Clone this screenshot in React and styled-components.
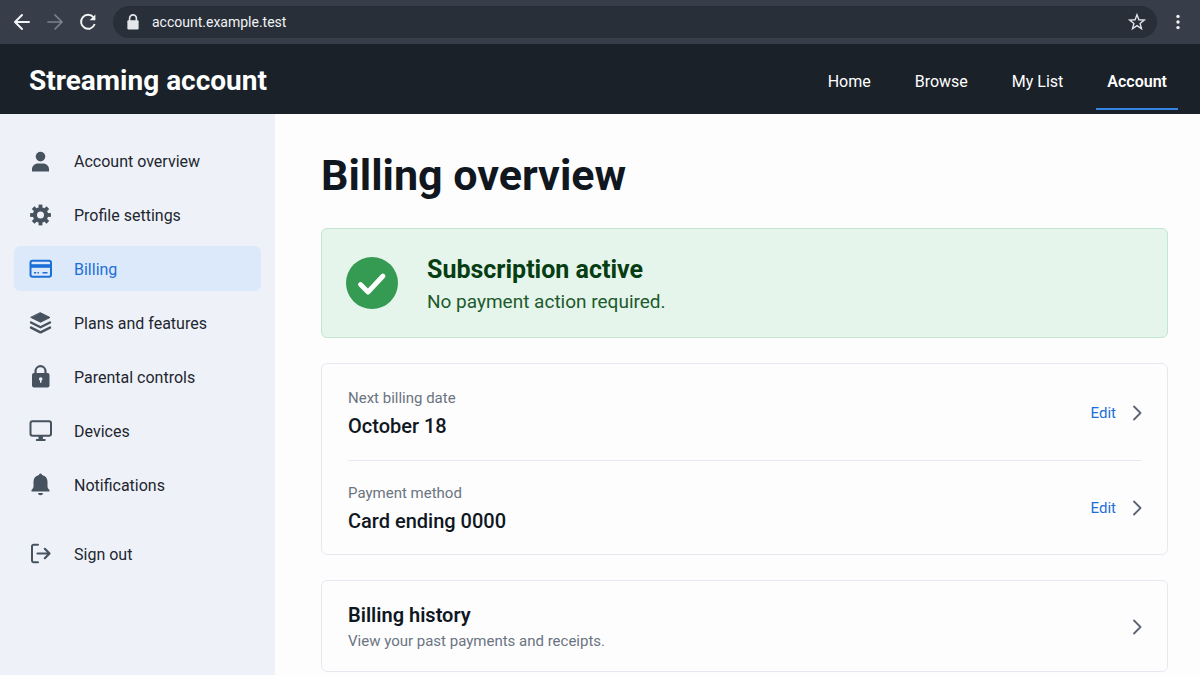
import React from 'react'
import styled, { createGlobalStyle } from 'styled-components'

const sans = "Roboto, 'Noto Sans', sans-serif"

const GlobalStyle = createGlobalStyle`
  * {
    box-sizing: border-box;
  }
  html, body, #root {
    min-height: 100vh;
  }
  body {
    margin: 0;
    background: #fdfdfe;
    color: #10171f;
    font-family: ${sans};
    font-size: 16px;
    line-height: 24px;
  }
  h1, h2, p, dl, dt, dd {
    margin: 0;
    padding: 0;
  }
  button, input {
    font: inherit;
  }
  a {
    color: inherit;
    text-decoration: none;
  }
`

/* icons */

const Svg = ({ size = 24, children }) => (
  <svg
    width={size}
    height={size}
    viewBox="0 0 24 24"
    fill="none"
    stroke="currentColor"
    strokeWidth="2"
    strokeLinecap="round"
    strokeLinejoin="round"
    aria-hidden="true"
  >
    {children}
  </svg>
)

const BackIcon = () => (
  <Svg>
    <path d="M19 12H5.5M12 5l-7 7 7 7" />
  </Svg>
)

const ForwardIcon = () => (
  <Svg>
    <path d="M5 12h13.5M12 5l7 7-7 7" strokeWidth="1.7" />
  </Svg>
)

const ReloadIcon = () => (
  <Svg>
    <path d="M17.4 7.2A7 7 0 1 0 18.7 14" strokeWidth="1.9" strokeLinecap="butt" />
    <path d="M19.4 4.4v5.8h-5.8z" fill="currentColor" stroke="none" />
  </Svg>
)

const SecureIcon = () => (
  <Svg size={18}>
    <path d="M7.5 11V7a4.5 4.5 0 0 1 9 0v4" strokeWidth="2.2" />
    <rect x="4.500" y="9.5" width="15" height="12.5" rx="1.6" fill="currentColor" stroke="none" />
  </Svg>
)

const StarIcon = () => (
  <Svg size={20}>
    <path
      d="M12 3.2l2.3 6.1 6.5.3-5.1 4.1 1.7 6.3-5.4-3.6-5.4 3.6 1.7-6.3-5.1-4.1 6.5-.3z"
      strokeWidth="1.6"
      strokeLinejoin="miter"
    />
  </Svg>
)

const MoreIcon = () => (
  <Svg>
    <g fill="currentColor" stroke="none">
      <circle cx="12" cy="6.4" r="1.7" />
      <circle cx="12" cy="12" r="1.7" />
      <circle cx="12" cy="17.6" r="1.7" />
    </g>
  </Svg>
)

const UserIcon = () => (
  <Svg>
    <g fill="currentColor" stroke="none">
      <circle cx="12.5" cy="7.6" r="4.8" />
      <path d="M4 22.4v-2.2c0-3.3 2.6-5.8 6-5.8h5c3.4 0 6 2.5 6 5.8v2.2z" />
    </g>
  </Svg>
)

const GearIcon = () => (
  <Svg>
    <circle cx="12.5" cy="12" r="5.6" strokeWidth="4.2" />
    <g strokeWidth="3.8" strokeLinecap="butt">
      {[0, 45, 90, 135, 180, 225, 270, 315].map((angle) => (
        <path key={angle} d="M12.5 5.500V1.600" transform={`rotate(${angle} 12.5 12)`} />
      ))}
    </g>
  </Svg>
)

const CardIcon = () => (
  <Svg>
    <rect x="2.5" y="3.8" width="20.5" height="16" rx="2" />
    <path d="M2.5 9h20.5" strokeWidth="3.600" strokeLinecap="butt" />
    <path d="M6 15.800h2.200M9.500 15.800h1.500M14.500 15.800h5" strokeWidth="1.400" strokeLinecap="butt" />
  </Svg>
)

const LayersIcon = () => (
  <Svg>
    <path d="M12.5 1.800l9.500 4.700-9.500 4.700L3 6.500z" fill="currentColor" strokeWidth="1" />
    <path d="M3 11.500l9.500 4.800 9.500-4.800M3 16.600l9.500 4.800 9.500-4.800" strokeWidth="2.400" />
  </Svg>
)

const LockIcon = () => (
  <Svg>
    <path d="M7.500 9V6.200a5 5 0 0 1 10 0V9" strokeWidth="2.200" />
    <rect x="4" y="8" width="17.500" height="14.500" rx="2" fill="currentColor" stroke="none" />
    <circle cx="12.700" cy="14" r="1.800" fill="#eef2f8" stroke="none" />
    <path d="M12.700 14.500v2.800" stroke="#eef2f8" strokeWidth="1.400" />
  </Svg>
)

const MonitorIcon = () => (
  <Svg>
    <rect x="2.500" y="2.300" width="20.500" height="14.500" rx="2" />
    <path d="M12.700 17v3" strokeWidth="4.500" strokeLinecap="butt" />
    <path d="M8.700 21H16.800" strokeWidth="1.800" />
  </Svg>
)

const BellIcon = () => (
  <Svg>
    <g fill="currentColor" stroke="none">
      <path d="M12.500.5a1.600 1.600 0 0 1 1.600 1.500c3.300.8 5.400 3.300 5.400 6.600v4.600c0 1.300.7 2.500 1.900 3.700.5.600.2 1.600-.7 1.600H4.300c-.9 0-1.200-1-.7-1.600 1.200-1.200 1.900-2.400 1.900-3.700V8.600c0-3.300 2.100-5.800 5.400-6.600a1.600 1.600 0 0 1 1.600-1.500z" />
      <path d="M10 20h5a2.500 2.200 0 0 1-5 0z" />
    </g>
  </Svg>
)

const SignOutIcon = () => (
  <Svg>
    <path d="M10 2.800H5.700A1.700 1.700 0 0 0 4 4.500v14a1.700 1.700 0 0 0 1.700 1.700H10" />
    <path d="M9.500 11.500H21M16.800 6.800l4.700 4.700-4.700 4.700" strokeWidth="2.200" />
  </Svg>
)

const ChevronIcon = () => (
  <Svg>
    <path d="M16 5.500l6.500 6.500-6.500 6.500" strokeWidth="1.800" />
  </Svg>
)

const CheckIcon = () => (
  <svg width="52" height="52" viewBox="0 0 52 52" fill="none" aria-hidden="true">
    <circle cx="26" cy="26" r="26" fill="#359a52" />
    <path d="M14.500 27.500l7.500 7.500 15-16" stroke="#fff" strokeWidth="4.800" strokeLinecap="round" strokeLinejoin="round" />
  </svg>
)

/* data */

const nav = ['Home', 'Browse', 'My List', 'Account']

const menu = [
  { label: 'Account overview', Icon: UserIcon },
  { label: 'Profile settings', Icon: GearIcon },
  { label: 'Billing', Icon: CardIcon },
  { label: 'Plans and features', Icon: LayersIcon },
  { label: 'Parental controls', Icon: LockIcon },
  { label: 'Devices', Icon: MonitorIcon },
  { label: 'Notifications', Icon: BellIcon },
  { label: 'Sign out', Icon: SignOutIcon, apart: true }
]

const details = [
  { label: 'Next billing date', value: 'October 18' },
  { label: 'Payment method', value: 'Card ending 0000' }
]

export default function App() {
  return (
    <Page>
      <GlobalStyle />
      <Toolbar>
        <ToolButton aria-label="Back"><BackIcon /></ToolButton>
        <ToolButton aria-label="Forward" disabled><ForwardIcon /></ToolButton>
        <ToolButton aria-label="Reload"><ReloadIcon /></ToolButton>
        <AddressBar>
          <SecureIcon />
          <Address type="text" aria-label="Address" defaultValue="account.example.test" />
          <ToolButton aria-label="Bookmark"><StarIcon /></ToolButton>
        </AddressBar>
        <ToolButton aria-label="More"><MoreIcon /></ToolButton>
      </Toolbar>
      <Header>
        <Brand href="#home">Streaming account</Brand>
        <Nav>
          {nav.map((item) => (
            <NavLink key={item} href={`#${item}`} $active={item === 'Account'}>
              {item}
            </NavLink>
          ))}
        </Nav>
      </Header>
      <Body>
        <Sidebar aria-label="Account">
          {menu.map(({ label, Icon, apart }) => (
            <MenuLink key={label} href={`#${label}`} $active={label === 'Billing'} $apart={apart}>
              <Icon />
              <span>{label}</span>
            </MenuLink>
          ))}
        </Sidebar>
        <Main>
          <Title>Billing overview</Title>
          <Status>
            <CheckIcon />
            <StatusBody>
              <StatusTitle>Subscription active</StatusTitle>
              <StatusText>No payment action required.</StatusText>
            </StatusBody>
          </Status>
          <Card>
            {details.map(({ label, value }) => (
              <Detail key={label}>
                <Entry>
                  <Label>{label}</Label>
                  <Value>{value}</Value>
                </Entry>
                <EditButton aria-label={`Edit ${label}`}>
                  Edit
                  <ChevronIcon />
                </EditButton>
              </Detail>
            ))}
          </Card>
          <HistoryLink href="#history">
            <div>
              <HistoryTitle>Billing history</HistoryTitle>
              <HistoryText>View your past payments and receipts.</HistoryText>
            </div>
            <ChevronIcon />
          </HistoryLink>
        </Main>
      </Body>
    </Page>
  )
}

const Page = styled.div`
  display: flex;
  flex-direction: column;
  min-height: 100vh;
`

const Toolbar = styled.div`
  display: flex;
  align-items: center;
  gap: 9px;
  height: 44px;
  padding: 0 10px;
  background: #373e4a;
  color: #f1f3f5;
`

const ToolButton = styled.button`
  display: flex;
  align-items: center;
  justify-content: center;
  width: 24px;
  height: 24px;
  padding: 0;
  border: 0;
  background: none;
  color: inherit;

  &:disabled {
    color: #7b828c;
  }
`

const AddressBar = styled.div`
  display: flex;
  flex: 1;
  align-items: center;
  gap: 10px;
  height: 32px;
  margin-left: 4px;
  padding: 0 8px 0 11px;
  border-radius: 16px;
  background: #282f39;
  color: #e3e6ea;
`

const Address = styled.input`
  flex: 1;
  min-width: 0;
  padding: 0;
  border: 0;
  outline: none;
  background: none;
  color: #f1f3f5;
  font-size: 14px;
`

const Header = styled.header`
  display: flex;
  align-items: stretch;
  justify-content: space-between;
  height: 70px;
  padding: 0 22px 4px 29px;
  background: #1a2129;
  color: #fff;
`

const Brand = styled.a`
  align-self: center;
  padding-top: 8px;
  font-size: 28px;
  font-weight: 700;
  line-height: 36px;
`

const Nav = styled.nav`
  display: flex;
  gap: 22px;
`

const NavLink = styled.a`
  display: flex;
  align-items: center;
  padding: 12px 11px 0;
  border-bottom: 2px solid ${(p) => (p.$active ? '#3584e4' : 'transparent')};
  font-size: 16px;
  font-weight: ${(p) => (p.$active ? 600 : 400)};
`

const Body = styled.div`
  display: flex;
  flex: 1;
`

const Sidebar = styled.nav`
  display: flex;
  flex-direction: column;
  gap: 9px;
  width: 275px;
  padding: 24px 14px;
  background: #eef2f8;
`

const MenuLink = styled.a`
  display: flex;
  align-items: center;
  gap: 22px;
  height: 45px;
  margin-top: ${(p) => (p.$apart ? '15px' : '0')};
  padding: 0 14px;
  border-radius: 6px;
  background: ${(p) => (p.$active ? '#dce9fa' : 'transparent')};
  color: ${(p) => (p.$active ? '#1b6fd8' : '#1e2630')};

  svg {
    color: ${(p) => (p.$active ? '#1b6fd8' : '#47525f')};
  }

  span {
    padding-top: 3px;
  }
`

const Main = styled.main`
  display: flex;
  flex: 1;
  flex-direction: column;
  gap: 25px;
  padding: 34px 32px 0 46px;
`

const Title = styled.h1`
  font-size: 43px;
  font-weight: 700;
  line-height: 55px;
`

const Status = styled.section`
  display: flex;
  align-items: center;
  gap: 29px;
  height: 110px;
  padding: 0 24px;
  border: 1px solid #c4e6d0;
  border-radius: 6px;
  background: #e5f5eb;
`

const StatusBody = styled.div`
  padding-top: 4px;
`

const StatusTitle = styled.h2`
  color: #063d12;
  font-size: 25px;
  font-weight: 700;
  line-height: 34px;
`

const StatusText = styled.p`
  color: #1d5a2c;
  font-size: 19px;
  line-height: 30px;
`

const Card = styled.section`
  padding: 2px 25px 0 26px;
  border: 1px solid #e6eaf0;
  border-radius: 6px;
`

const Detail = styled.div`
  display: flex;
  align-items: center;
  justify-content: space-between;
  height: 94px;

  & + & {
    border-top: 1px solid #e6eaf0;
  }
`

const Entry = styled.dl`
  padding-top: 2px;
`

const Label = styled.dt`
  color: #6b7480;
  font-size: 15px;
`

const Value = styled.dd`
  font-size: 20px;
  font-weight: 500;
  line-height: 32px;
`

const EditButton = styled.button`
  display: flex;
  align-items: center;
  gap: 2px;
  padding: 0;
  border: 0;
  background: none;
  color: #1b6fd8;
  font-size: 15px;

  svg {
    color: #5a6472;
  }
`

const HistoryLink = styled.a`
  display: flex;
  align-items: center;
  justify-content: space-between;
  height: 92px;
  padding: 2px 25px 0 26px;
  border: 1px solid #e6eaf0;
  border-radius: 6px;

  > svg {
    color: #5a6472;
  }
`

const HistoryTitle = styled.h2`
  font-size: 20px;
  font-weight: 600;
  line-height: 28px;
`

const HistoryText = styled.p`
  color: #6b7480;
  font-size: 15px;
`
